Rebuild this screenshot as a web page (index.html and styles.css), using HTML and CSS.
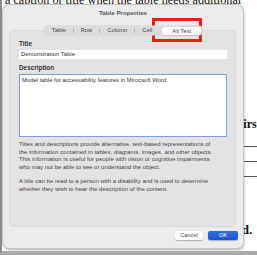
FILE: index.html
```html
<!DOCTYPE html>
<html lang="en">

<head>
    <meta charset="UTF-8">
    <meta name="viewport" content="width=device-width, initial-scale=1.0">
    <title>Table Properties - Alt Text</title>
    <link rel="stylesheet" href="styles.css">
</head>

<body>
    <div class="frame">
        <!-- Word document behind the dialog -->
        <div class="doc">
            <p class="doc-line">a caption or title when the table needs additional</p>
            <div class="doc-side">
                <p class="doc-head">First</p>
                <div class="doc-rows">
                    <div class="doc-row"></div>
                    <div class="doc-row"></div>
                    <div class="doc-row"></div>
                </div>
                <p class="doc-end">ed.</p>
            </div>
        </div>

        <!-- Table Properties dialog -->
        <div class="dialog">
            <div class="dialog-title">Table Properties</div>

            <div class="tabs">
                <span class="tab">Table</span>
                <span class="sep"></span>
                <span class="tab">Row</span>
                <span class="sep"></span>
                <span class="tab">Column</span>
                <span class="sep"></span>
                <span class="tab">Cell</span>
                <span class="tab active">Alt Text</span>
            </div>

            <div class="panel">
                <label class="field-label">Title</label>
                <div class="input">Demonstration Table</div>

                <label class="field-label">Description</label>
                <div class="textarea">Model table for accessability features in Mirocsoft Word.</div>

                <p class="help">Titles and descriptions provide alternative, text-based representations of<br>the information contained in tables, diagrams, images, and other objects.<br>This information is useful for people with vision or cognitive impairments<br>who may not be able to see or understand the object.</p>
                <p class="help">A title can be read to a person with a disability and is used to determine<br>whether they wish to hear the description of the content.</p>
            </div>

            <div class="buttons">
                <button class="btn">Cancel</button>
                <button class="btn primary">OK</button>
            </div>
        </div>

        <!-- red callout around the Alt Text tab -->
        <div class="callout"></div>
    </div>
</body>

</html>
```

FILE: styles.css
```css
body {
    margin: 0;
    padding: 0;
    width: 257px;
    height: 255px;
    overflow: hidden;
    background: #fff;
    font-family: "Liberation Sans", Arial, sans-serif;
}

.frame {
    position: relative;
    width: 255px;
    height: 251px;
    border-left: 2px solid #8c8c8c;
    border-bottom: 4px solid #a9a9a9;
    overflow: hidden;
    background: #fff;
}

/* document */
.doc {
    height: 100%;
    display: flex;
    flex-direction: column;
    font-family: "Liberation Serif", "Times New Roman", serif;
    color: #111;
}

.doc-line {
    margin: -6px 0 0 3px;
    font-size: 12.2px;
    line-height: 12px;
    white-space: nowrap;
}

.doc-side {
    margin-left: 234px;
    display: flex;
    flex-direction: column;
}

.doc-head {
    margin: 112px 0 0 0;
    font-size: 12px;
    font-weight: bold;
    line-height: 12px;
    white-space: nowrap;
}

.doc-rows {
    margin-top: 16px;
    display: flex;
    flex-direction: column;
    gap: 14px;
}

.doc-row {
    height: 1px;
    background: #555;
}

.doc-end {
    margin: 46px 0 0 0;
    font-size: 13px;
    font-weight: bold;
    line-height: 13px;
}

/* dialog */
.dialog {
    position: absolute;
    left: 1px;
    top: 5px;
    width: 240px;
    height: 243px;
    background: #ececec;
    border-radius: 6px;
    box-shadow: 0 0 0 1px #c4c4c4, 1px 2px 3px rgba(0, 0, 0, 0.3);
    display: flex;
    flex-direction: column;
    color: #333;
}

.dialog-title {
    text-align: center;
    font-size: 6.2px;
    font-weight: bold;
    color: #555;
    margin-top: 4px;
    line-height: 7px;
}

.tabs {
    align-self: center;
    margin: 10px 0 0 0;
    height: 9px;
    display: flex;
    align-items: center;
    background: #dcdcdc;
    border-radius: 3px;
    padding: 0 1px;
    font-size: 5.8px;
    color: #444;
    position: relative;
    z-index: 1;
    box-shadow: 0 0 0 0.5px #d0d0d0;
}

.tab {
    padding: 0 7px;
    line-height: 9px;
}

.tab.active {
    background: #fff;
    border-radius: 3px;
    line-height: 8px;
    padding: 0 10px;
    margin-left: 3px;
    box-shadow: 0 0.5px 1px rgba(0, 0, 0, 0.2);
}

.sep {
    width: 1px;
    height: 5px;
    background: #b8b8b8;
}

.panel {
    margin: -5px 7px 0 6px;
    height: 197px;
    box-sizing: border-box;
    background: #e3e3e3;
    border: 1px solid #dadada;
    border-radius: 4px;
    padding: 9px 8px 0 9px;
    display: flex;
    flex-direction: column;
}

.field-label {
    font-size: 6.4px;
    font-weight: bold;
    color: #333;
    line-height: 7px;
}

.input {
    margin-top: 3px;
    height: 9px;
    background: #fff;
    font-size: 5.9px;
    line-height: 9px;
    padding-left: 2px;
    color: #333;
    margin-bottom: 5px;
}

.textarea {
    margin-top: 3px;
    height: 63px;
    box-sizing: border-box;
    background: #fff;
    border: 1px solid #7e9fe0;
    font-size: 5.9px;
    line-height: 8px;
    padding: 1px 2px;
    color: #333;
}

.help {
    margin: 4px 0 0 0;
    font-size: 6px;
    line-height: 7.5px;
    color: #444;
    white-space: nowrap;
}

.help + .help {
    margin-top: 7px;
}

.buttons {
    margin: 4px 5px 0 0;
    display: flex;
    justify-content: flex-end;
    gap: 5px;
}

.btn {
    height: 9px;
    padding: 0;
    border: none;
    border-radius: 2px;
    font-family: "Liberation Sans", Arial, sans-serif;
    font-size: 5.6px;
    line-height: 9px;
    color: #444;
    background: #fff;
    width: 28px;
    box-shadow: 0 0.5px 1px rgba(0, 0, 0, 0.25);
}

.btn.primary {
    width: 30px;
    background: linear-gradient(#2f6fe4, #1b55cf);
    color: #fff;
}

.callout {
    position: absolute;
    left: 150px;
    top: 18px;
    width: 44px;
    height: 18px;
    border: 3.5px solid #f21c12;
}
```
